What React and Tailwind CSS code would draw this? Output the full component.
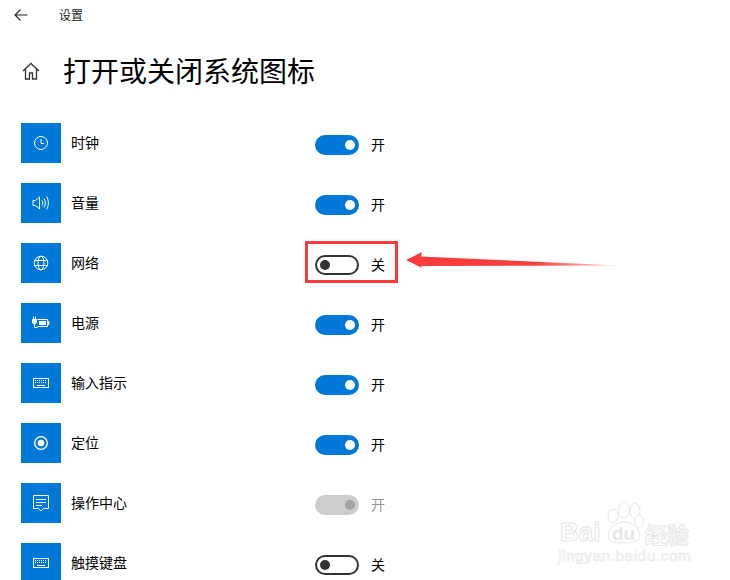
const ClockIcon = () => (
  <svg width="16" height="16" viewBox="0 0 16 16" fill="none" stroke="white" strokeWidth="1">
    <circle cx="8" cy="8" r="6.5" />
    <path d="M8 4v4.5h3" />
  </svg>
)

const VolumeIcon = () => (
  <svg width="18" height="16" viewBox="0 0 18 16" fill="none" stroke="white" strokeWidth="1">
    <path d="M1 5.5h2.5L7.5 2v12l-4-3.5H1z" />
    <path d="M10 5.5c1 1.5 1 3.500 0 5" />
    <path d="M12 3.500c1.800 2.800 1.800 6.200 0 9" />
    <path d="M14.500 1.500c2.500 4 2.500 9 0 13" />
  </svg>
)

const GlobeIcon = () => (
  <svg width="16" height="16" viewBox="0 0 16 16" fill="none" stroke="white" strokeWidth="1">
    <circle cx="8" cy="8" r="6.800" />
    <ellipse cx="8" cy="8" rx="3" ry="6.800" />
    <path d="M1.500 5.500h13M1.500 10.500h13" />
  </svg>
)

const BatteryIcon = () => (
  <svg width="18" height="14" viewBox="0 0 18 14" fill="none" stroke="white" strokeWidth="1">
    <path d="M5.500 3.500h10v7h-10" />
    <path d="M15.500 5.500h1.500v3h-1.500" fill="white" />
    <path d="M0.500 3.500h4v2.500a2 2 0 0 1-4 0z" fill="white" />
    <path d="M1.500 0.500v3M3.500 0.500v3M2.500 8v3.500h3" />
    <path d="M7 5h7v4h-7z" fill="white" stroke="none" />
  </svg>
)

const KeyboardIcon = () => (
  <svg width="16" height="12" viewBox="0 0 16 12" fill="none" stroke="white" strokeWidth="1">
    <rect x="0.500" y="1.500" width="15" height="9" />
    <path d="M2 3.500h12M2 5.500h12" strokeDasharray="1 1" />
    <path d="M4 8.500h8" />
  </svg>
)

const LocationIcon = () => (
  <svg width="16" height="16" viewBox="0 0 16 16" fill="none" stroke="white" strokeWidth="1.300">
    <circle cx="8" cy="8" r="6.300" />
    <circle cx="8" cy="8" r="3.300" fill="white" stroke="none" />
  </svg>
)

const ActionIcon = () => (
  <svg width="16" height="17" viewBox="0 0 16 17" fill="none" stroke="white" strokeWidth="1">
    <path d="M0.500 0.500h15v13h-5l-2.500 2.500-2.500-2.500h-5z" />
    <path d="M3 4.500h10M3 7.500h10M3 10.500h6" />
  </svg>
)

const rows = [
  { name: "时钟", icon: <ClockIcon />, state: "on" },
  { name: "音量", icon: <VolumeIcon />, state: "on" },
  { name: "网络", icon: <GlobeIcon />, state: "off" },
  { name: "电源", icon: <BatteryIcon />, state: "on" },
  { name: "输入指示", icon: <KeyboardIcon />, state: "on" },
  { name: "定位", icon: <LocationIcon />, state: "on" },
  { name: "操作中心", icon: <ActionIcon />, state: "disabled" },
  { name: "触摸键盘", icon: <KeyboardIcon />, state: "off" },
]

const Toggle = ({ state }) => {
  if (state === "on") {
    return (
      <div className="flex items-center justify-end w-[44px] h-[20px] pr-[4px] rounded-full bg-[#0078d7]">
        <div className="w-[10px] h-[10px] rounded-full bg-white" />
      </div>
    )
  }
  if (state === "disabled") {
    return (
      <div className="flex items-center justify-end w-[44px] h-[20px] pr-[4px] rounded-full bg-[#cccccc]">
        <div className="w-[10px] h-[10px] rounded-full bg-[#a3a3a3]" />
      </div>
    )
  }
  return (
    <div className="flex items-center w-[44px] h-[20px] pl-[3px] rounded-full border-2 border-[#333333]">
      <div className="w-[10px] h-[10px] rounded-full bg-[#333333]" />
    </div>
  )
}

const Row = ({ name, icon, state }) => (
  <div className="flex shrink-0 h-[40px]">
    <div className="flex items-center justify-center w-[40px] h-[40px] bg-[#0078d7]">
      {icon}
    </div>
    <div className="w-[254px] pl-[10px] text-[14px] leading-[38px] text-black">{name}</div>
    <div className="flex items-center gap-[12px] h-[20px] mt-[12px]">
      <Toggle state={state} />
      <span className={`mb-[2px] text-[14px] ${state === "disabled" ? "text-[#999999]" : "text-black"}`}>
        {state === "off" ? "关" : "开"}
      </span>
    </div>
  </div>
)

// red marker box and arrow drawn over the page
const Marker = () => (
  <>
    <div className="absolute left-[305px] top-[241px] w-[93px] h-[42px] border-[3px] border-[#f83c3c]" />
    <svg className="absolute left-[400px] top-[245px]" width="225" height="30" viewBox="0 0 225 30">
      <defs>
        <linearGradient id="tail" x1="0" x2="1" y1="0" y2="0">
          <stop offset="0.6" stopColor="#fa3c3c" />
          <stop offset="1" stopColor="#fa3c3c" stopOpacity="0.15" />
        </linearGradient>
      </defs>
      <path d="M6 15L22 7L21 11.500L220 20.500L21 21L22 23Z" fill="url(#tail)" />
    </svg>
  </>
)

const Watermark = () => (
  <div className="absolute left-[558px] top-[498px] w-[160px] h-[70px] font-['Liberation_Sans',sans-serif] text-white">
    <svg className="absolute left-[45px] top-0" width="46" height="50" viewBox="0 0 46 50" fill="white" stroke="#e6e6e6" strokeWidth="1">
      <ellipse cx="10" cy="18" rx="5" ry="6.500" />
      <ellipse cx="21" cy="12" rx="5.500" ry="8" />
      <ellipse cx="32" cy="13" rx="5" ry="8" />
      <ellipse cx="36" cy="23" rx="4.500" ry="6" />
      <path d="M5 38c0-8 8-14 16-14s16 6 16 14c0 5-7 7-16 7s-16-2-16-7z" />
    </svg>
    <span className="absolute left-[2px] top-[18px] text-[26px] leading-[32px] font-bold [-webkit-text-stroke:1px_#e6e6e6]">Bai</span>
    <span className="absolute left-[54px] top-[26px] text-[19px] leading-[20px] font-bold text-[#e6e6e6]">du</span>
    <span className="absolute left-[87px] top-[23px] text-[22px] leading-[24px] font-['Noto_Sans_CJK_SC',sans-serif] font-bold [-webkit-text-stroke:1px_#e6e6e6]">经验</span>
    <span className="absolute left-0 top-[49px] text-[15.500px] leading-[18px] tracking-[0.500px] [-webkit-text-stroke:0.700px_#e8e8e8]">jingyan.baidu.com</span>
  </div>
)

const App = () => {
  return (
    <div className="relative w-[730px] h-[580px] overflow-hidden bg-white font-['Noto_Sans_CJK_SC','Noto_Sans',sans-serif]">

      {/* Title bar */}
      <div className="flex items-center h-[30px]">
        <svg className="ml-[14px]" width="14" height="14" viewBox="0 0 14 14" fill="none" stroke="#222222" strokeWidth="1.100">
          <path d="M13.500 7H1M6.500 1.500L1 7l5.500 5.500" />
        </svg>
        <span className="ml-[31px] text-[12px] text-[#222222]">设置</span>
      </div>

      {/* Heading */}
      <div className="flex items-center h-[82px]">
        <svg className="ml-[22px]" width="18" height="18" viewBox="0 0 18 18" fill="none" stroke="#333333" strokeWidth="1.300">
          <path d="M1 9L9 1.500L17 9M3.500 7v10h4v-6h3v6h4V7" />
        </svg>
        <h1 className="ml-[23px] mb-[2px] text-[28px] leading-[40px] font-normal text-black">打开或关闭系统图标</h1>
      </div>

      {/* Icon list */}
      <div className="flex flex-col gap-[20px] mt-[11px] ml-[21px]">
        {rows.map((row) => (
          <Row key={row.name} {...row} />
        ))}
      </div>

      <Marker />
      <Watermark />
    </div>
  )
}

export default App
